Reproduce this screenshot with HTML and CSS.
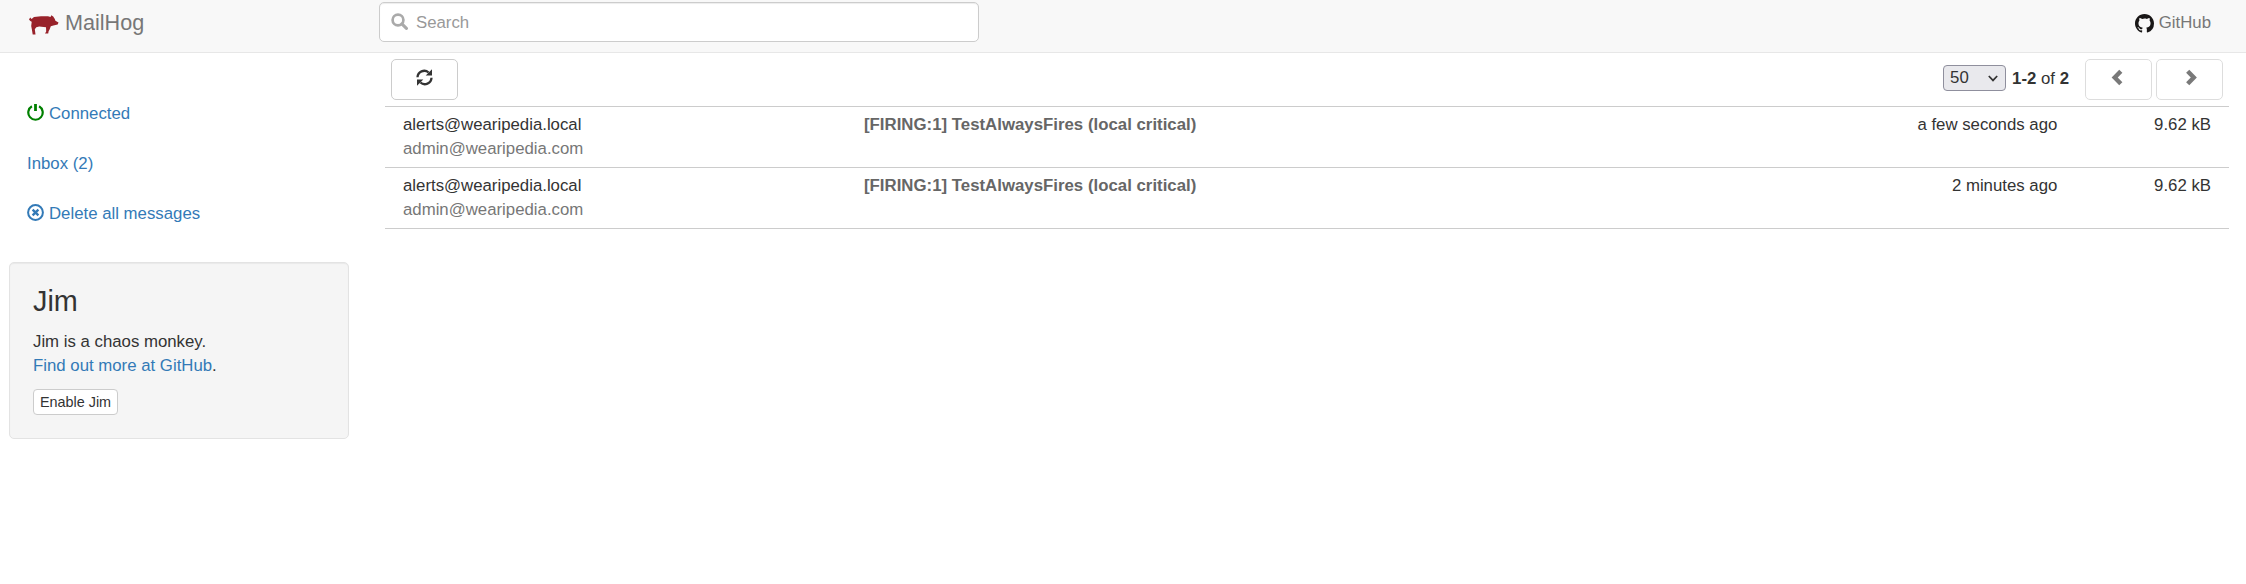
FILE: index.html
```html
<!DOCTYPE html>
<html lang="en">
<head>
<meta charset="utf-8">
<title>MailHog</title>
<link rel="stylesheet" href="styles.css">
</head>
<body>
<nav class="navbar">
  <a class="brand" href="#">
    <svg class="pig" viewBox="0 0 30 20" fill="#98222a"><path d="M1.2 2.6 2.6 4 5 2.1 12 1.2 19 1.3 21.5 2 22.3.2 24.2 1.6 25.8 4 26.4 5.8 29.5 7.5 28.7 9.6 24.4 10.6 21.8 11.3 20.6 14.4 19.6 16.2 19.2 18.6H16L17.2 16.4 17 12.2 10.2 11.6 7.3 12.2 5.8 14.2 6.5 19.4H3.7L2.8 14 2.2 11 2.7 6.7 1.3 5.9 0 4.5Z"/></svg>
    <span>MailHog</span>
  </a>
  <label class="search">
    <svg class="icon" viewBox="0 0 17 17" fill="none" stroke="#aaa"><circle cx="7" cy="7" r="5.4" stroke-width="2.7"/><path d="m10.9 10.9 4.5 4.5" stroke-width="3.1" stroke-linecap="round"/></svg>
    <input class="search-input" type="text" placeholder="Search">
  </label>
  <a class="github" href="#">
    <svg class="octocat" viewBox="0 0 16 16" fill="#191717"><path d="M8 0C3.58 0 0 3.58 0 8c0 3.54 2.29 6.53 5.47 7.59.4.07.55-.17.55-.38 0-.19-.01-.82-.01-1.49-2.01.37-2.53-.49-2.69-.94-.09-.23-.48-.94-.82-1.13-.28-.15-.68-.52-.01-.53.63-.01 1.08.58 1.23.82.72 1.21 1.87.87 2.33.66.07-.52.28-.87.51-1.07-1.78-.2-3.64-.89-3.64-3.95 0-.87.31-1.59.82-2.15-.08-.2-.36-1.02.08-2.12 0 0 .67-.21 2.2.82A7.6 7.6 0 0 1 8 3.86c.68 0 1.36.09 2 .27 1.53-1.04 2.2-.82 2.2-.82.44 1.1.16 1.92.08 2.12.51.56.82 1.27.82 2.15 0 3.07-1.87 3.75-3.65 3.95.29.25.54.73.54 1.48 0 1.07-.01 1.93-.01 2.2 0 .21.15.46.55.38A8 8 0 0 0 16 8c0-4.42-3.58-8-8-8Z"/></svg>
    <span>GitHub</span>
  </a>
</nav>
<div class="layout">
  <aside class="sidebar">
    <ul class="menu">
      <li><a href="#"><svg class="icon" viewBox="0 0 17 17" fill="none" stroke="#008000"><path d="M4.9 2.3A7.2 7.2 0 1 0 12.1 2.3" stroke-width="2.2"/><path d="M8.5 0V7" stroke-width="2.8"/></svg><span>Connected</span></a></li>
      <li><a href="#">Inbox (2)</a></li>
      <li><a href="#"><svg class="icon" viewBox="0 0 17 17" fill="none" stroke="#337ab7"><circle cx="8.5" cy="8.5" r="7.4" stroke-width="2"/><path d="m5.6 5.6 5.8 5.8m0-5.8-5.8 5.8" stroke-width="2.3"/></svg><span>Delete all messages</span></a></li>
    </ul>
    <section class="well">
      <h3>Jim</h3>
      <p>Jim is a chaos monkey.<br><a href="#">Find out more at GitHub</a>.</p>
      <button class="btn-small">Enable Jim</button>
    </section>
  </aside>
  <main class="content">
    <div class="toolbar">
      <button class="btn"><svg class="icon" viewBox="0 0 17 17"><g fill="none" stroke="#333" stroke-width="2.3"><path d="M1.5 8.3A6.7 6.7 0 0 1 12.6 3.5"/><path d="M15.5 8.7A6.7 6.7 0 0 1 4.4 13.5"/></g><path fill="#333" d="M16 .3V6.6H9.7ZM1 16.7V10.4H7.3Z"/></svg></button>
      <div class="pager">
        <div class="select"><span>50</span><svg class="caret" viewBox="0 0 10 7" fill="none" stroke="#333" stroke-width="1.7"><path d="m.8 1 4.2 4.4L9.2 1"/></svg></div>
        <span class="range"><b>1-2</b> of <b>2</b></span>
        <button class="btn disabled prev"><svg class="icon" viewBox="0 0 17 17" fill="none" stroke="#333" stroke-width="4.4"><path d="M10.8 2.2 4.7 8.5l6.1 6.3"/></svg></button>
        <button class="btn disabled"><svg class="icon" viewBox="0 0 17 17" fill="none" stroke="#333" stroke-width="4.4"><path d="m6.7 2.2 6.1 6.3-6.1 6.3"/></svg></button>
      </div>
    </div>
    <div class="messages">
      <div class="row">
        <div class="cell">alerts@wearipedia.local<div class="to">admin@wearipedia.com</div></div>
        <div class="cell subject">[FIRING:1] TestAlwaysFires (local critical)</div>
        <div class="cell right">a few seconds ago</div>
        <div class="cell right">9.62 kB</div>
      </div>
      <div class="row">
        <div class="cell">alerts@wearipedia.local<div class="to">admin@wearipedia.com</div></div>
        <div class="cell subject">[FIRING:1] TestAlwaysFires (local critical)</div>
        <div class="cell right">2 minutes ago</div>
        <div class="cell right">9.62 kB</div>
      </div>
    </div>
  </main>
</div>
</body>
</html>
```
FILE: styles.css
```css
* { box-sizing: border-box; }
body {
  margin: 0;
  background: #fff;
  color: #333;
  font: 16.8px/24px "Liberation Sans", Arial, sans-serif;
}
a { color: #337ab7; text-decoration: none; }
button, input { font-family: inherit; }
.icon { width: 17px; height: 17px; flex: none; display: block; }

.navbar {
  display: grid;
  grid-template-columns: 379px 600px 1fr;
  height: 53px;
  background: #f8f8f8;
  border-bottom: 1px solid #e7e7e7;
}
.brand {
  display: flex;
  align-items: flex-start;
  padding: 11px 0 0 29px;
  gap: 6px;
  color: #777;
  font-size: 21.6px;
}
.pig { width: 30px; height: 20px; margin-top: 4px; }
.search {
  display: flex;
  align-items: center;
  height: 40px;
  margin-top: 2px;
  padding: 0 11px;
  gap: 8px;
  background: #fff;
  border: 1px solid #ccc;
  border-radius: 5px;
  box-shadow: inset 0 1px 1px rgba(0, 0, 0, .075);
}
.search .icon { margin-top: -2px; }
.search-input {
  flex: 1;
  border: 0;
  padding: 1px 0 0;
  outline: 0;
  background: none;
  font-size: 16.8px;
}
.search-input::placeholder { color: #999; }
.github {
  display: flex;
  justify-self: end;
  gap: 5px;
  padding: 11px 35px 0 0;
  color: #777;
}
.octocat { width: 19px; height: 19px; margin-top: 3px; }

.layout { display: grid; grid-template-columns: 385px 1fr; }
.sidebar { padding: 36px 36px 0 9px; }
.menu { list-style: none; margin: 0; padding: 0 0 0 18px; }
.menu a { display: flex; align-items: center; gap: 5px; height: 50px; }
.menu .icon { margin-top: -3px; }
.well {
  height: 177px;
  margin-top: 23px;
  padding: 22px 23px;
  background: #f5f5f5;
  border: 1px solid #e3e3e3;
  border-radius: 5px;
  box-shadow: inset 0 1px 1px rgba(0, 0, 0, .05);
}
.well h3 { margin: 0 0 13px; font-size: 28.8px; line-height: 32px; font-weight: 500; }
.well p { margin: 0 0 11px; }
.btn-small {
  display: block;
  width: 85px;
  height: 26px;
  padding: 0;
  color: #333;
  background: #fff;
  border: 1px solid #ccc;
  border-radius: 4px;
  font-size: 14.4px;
}

.content { padding-right: 17px; }
.toolbar {
  display: flex;
  justify-content: space-between;
  height: 53px;
  padding: 6px 6px 0;
}
.btn {
  display: flex;
  align-items: center;
  justify-content: center;
  width: 67px;
  height: 41px;
  padding: 0 0 4px;
  background: #fff;
  border: 1px solid #ccc;
  border-radius: 5px;
}
.disabled { opacity: .65; }
.pager { display: flex; align-items: center; height: 41px; }
.select {
  display: flex;
  align-items: center;
  justify-content: space-between;
  width: 63px;
  height: 26px;
  padding: 0 7px 0 6px;
  background: #e9e9ed;
  border: 1px solid #8f8f9d;
  border-radius: 4px;
  margin-top: -3px;
}
.caret { width: 10px; height: 7px; }
.range { margin: -1px 16px 0 6px; }
.prev { margin-right: 4px; }
.messages { border-top: 1px solid #ccc; }
.row {
  display: grid;
  grid-template-columns: 3fr 6fr 2fr 1fr;
  height: 61px;
  padding-top: 6px;
  border-bottom: 1px solid #ccc;
}
.cell { padding: 0 18px; white-space: nowrap; }
.to { color: #777; }
.subject { color: #666; font-weight: bold; letter-spacing: .015px; }
.right { text-align: right; }
```
